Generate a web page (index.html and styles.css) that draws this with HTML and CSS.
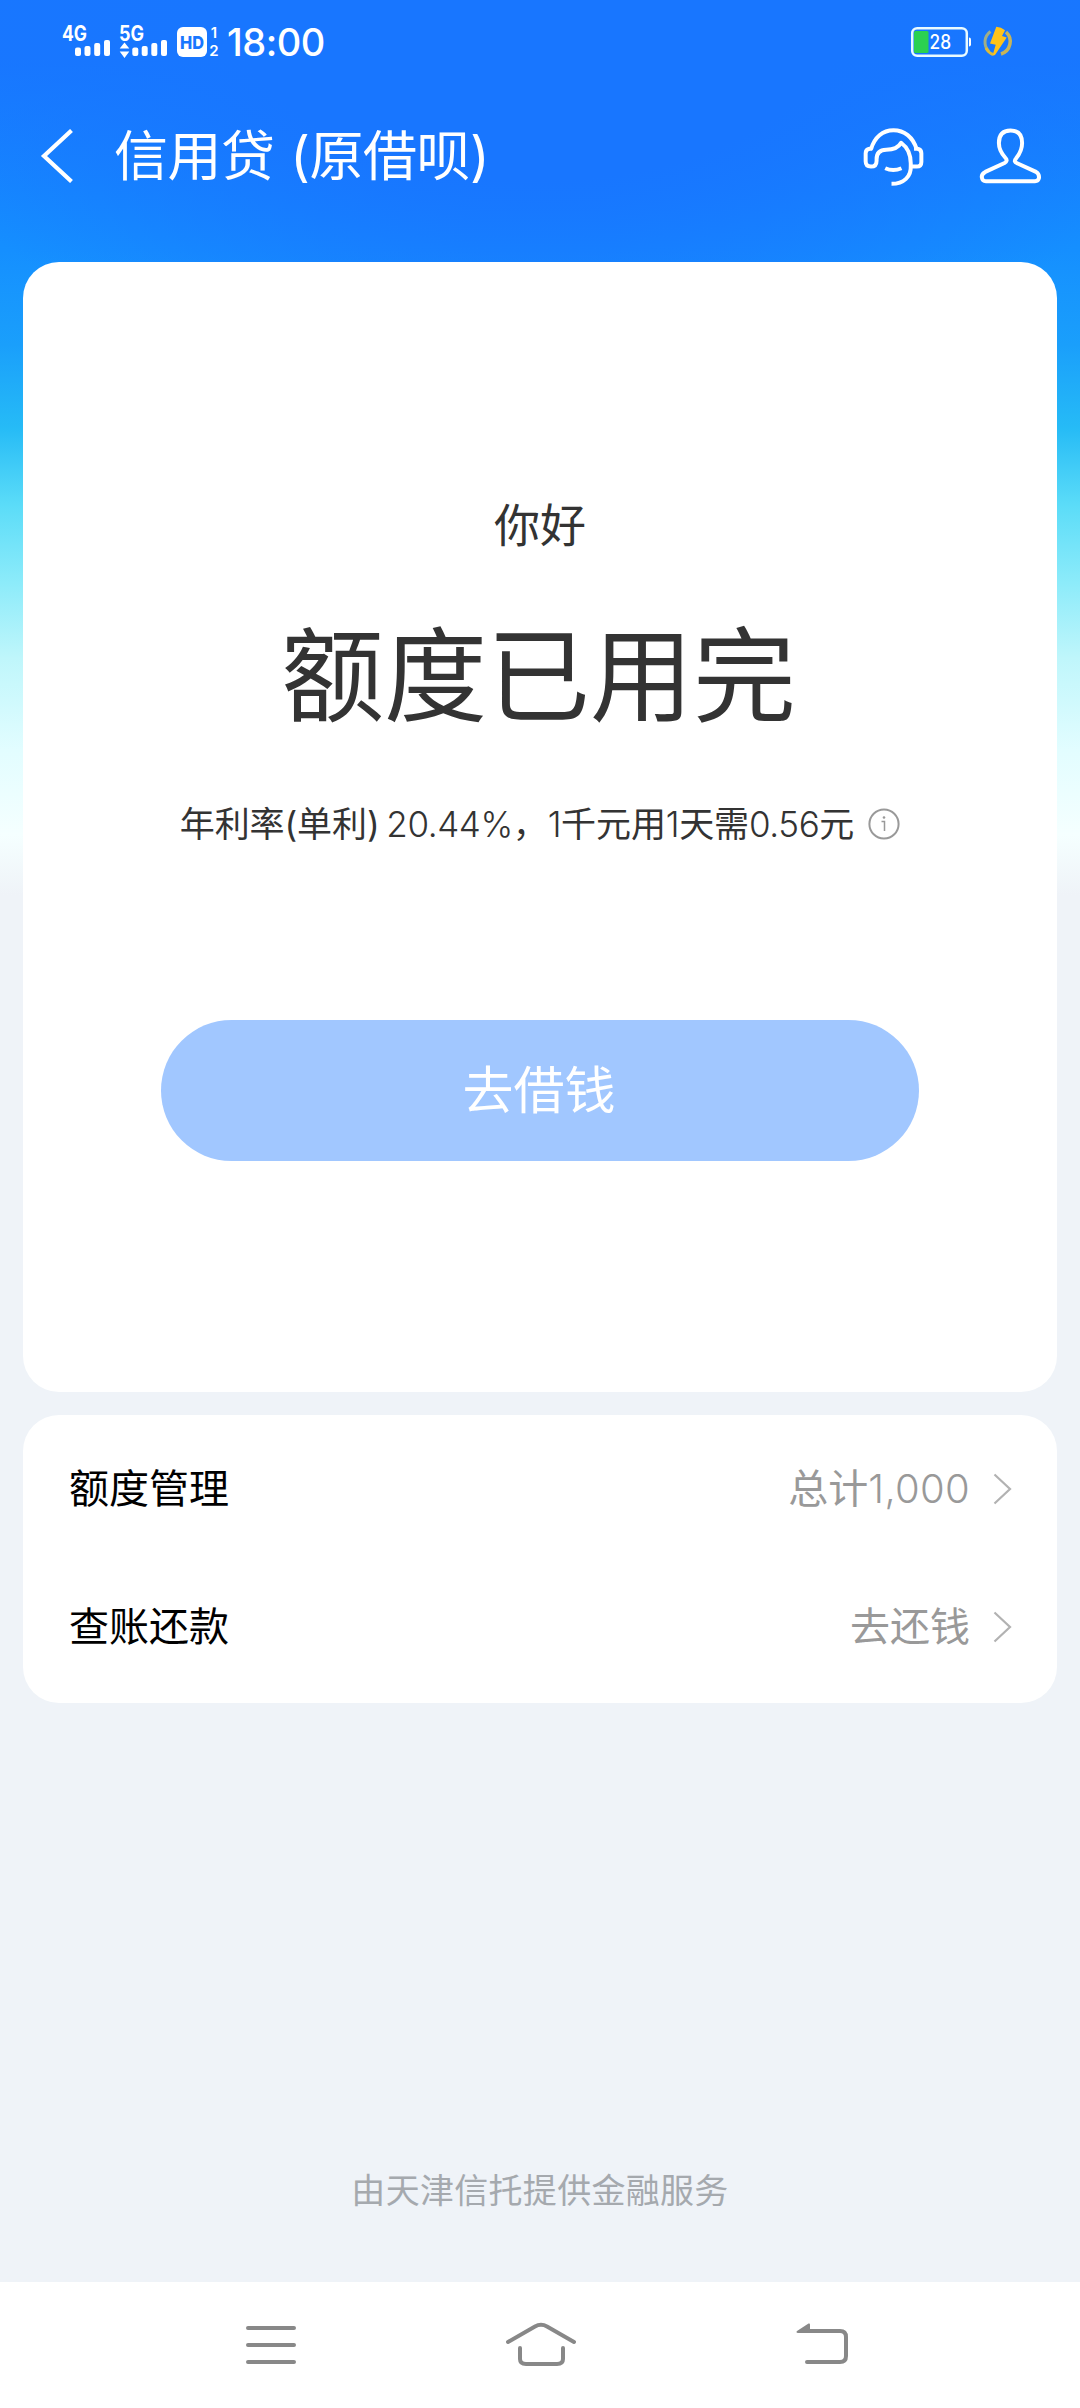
FILE: index.html
```html
<!DOCTYPE html>
<html lang="zh-CN">
<head>
<meta charset="utf-8">
<title>信用贷</title>
<link rel="stylesheet" href="styles.css">
</head>
<body>
<div class="page">
  <div class="status">
    <svg class="signals" viewBox="0 2 150 40" aria-hidden="true">
      <g fill="#fff">
        <text class="net" x="2" y="20.5" textLength="25" lengthAdjust="spacingAndGlyphs">4G</text>
        <rect x="15" y="27.5" width="6" height="8.5" rx="2"/><rect x="24.5" y="26" width="6" height="10" rx="2"/><rect x="34.2" y="23" width="6" height="13" rx="2"/><rect x="44" y="20" width="6" height="16" rx="2"/>
        <text class="net" x="59" y="20.5" textLength="25" lengthAdjust="spacingAndGlyphs">5G</text>
        <path d="M64.500 22.500l4.800 6h-9.600zM64.500 38l4.800-6.500h-9.600z"/>
        <rect x="72.300" y="27.500" width="6" height="8.500" rx="2"/><rect x="81.700" y="26" width="6" height="10" rx="2"/><rect x="91.300" y="23" width="6" height="13" rx="2"/><rect x="101" y="20" width="6" height="16" rx="2"/>
        <rect x="117" y="7" width="30" height="30" rx="6"/>
      </g>
      <text class="hd" x="120" y="28.500" textLength="24" lengthAdjust="spacingAndGlyphs">HD</text>
    </svg>
    <div class="sims"><span>1</span><span>2</span></div>
    <span class="time">18:00</span>
    <svg class="power" viewBox="0 2 106 40" aria-hidden="true">
      <rect x="5.200" y="8.200" width="54.600" height="27.600" rx="5" fill="none" stroke="#e9fbff" stroke-width="2.500"/>
      <rect x="7" y="11" width="14.500" height="22" rx="1.500" fill="#2bd151"/>
      <path d="M62 17.500q2 0 2 2v5q0 2-2 2z" fill="#fff"/>
      <text class="level" x="22.500" y="29" textLength="21.500" lengthAdjust="spacingAndGlyphs">28</text>
      <path d="M83.500 11.500a13 13 0 0 0-1.500 20" fill="none" stroke="#9fae88" stroke-width="3"/>
      <path d="M99 12a13 13 0 0 1-5 22" fill="none" stroke="#c7b459" stroke-width="3.500"/>
      <path d="M79 28q2 4.500 7 6.500" fill="none" stroke="#ddbb38" stroke-width="3"/>
      <path d="M89.300 6.700q5 .3 8.700 3.500l-3 5.800 4.700 1.500L88 35l-2.500.7 3.200-11-5.700-1.200z" fill="#ffc31a"/>
    </svg>
  </div>

  <header class="topbar">
    <svg class="back" viewBox="0 0 34 54"><path d="M31.500 1.500L4 27l27.500 25.500" fill="none" stroke="#fff" stroke-width="4.200"/></svg>
    <h1 class="title">信用贷 (原借呗)</h1>
    <svg class="tool" viewBox="130 80 190 180">
      <g fill="none" stroke="#fff" stroke-width="12" stroke-linejoin="round">
        <path d="M154 150C164 113 190 92 222 92s59 21 70 58"/>
        <path d="M158 148h-8q-12 2-12 14v24q0 16 16 16 17 0 17-18v-4c0-20 11-29 29-29 24 0 38-8 45-21 19 14 29 36 29 62v8c2 32-21 54-58 54"/>
        <path d="M284 148h10q12 2 12 14v26q0 14-14 14h-16"/>
        <path d="M197 207q24 11 49 0"/>
      </g>
    </svg>
    <svg class="tool" viewBox="478 80 190 180">
      <path d="M487 236q-3-11 10-18l58-27q11-6 3-15c-16-17-20-30-20-45 0-26 13-38 35-38s35 12 35 38c0 17-4 29-18 46-7 8-4 12 3 15l57 26q10 6 9 18-2 10-12 10H499q-11 0-12-10z" fill="none" stroke="#fff" stroke-width="12" stroke-linejoin="round"/>
    </svg>
  </header>

  <main class="content">
    <section class="card quota">
      <p class="hello">你好</p>
      <p class="headline">额度已用完</p>
      <p class="rate"><span>年利率(单利) <span class="num">20.44%</span>，<span class="num">1</span>千元用<span class="num">1</span>天需<span class="num">0.56</span>元</span>
        <svg class="info" viewBox="0 0 32 32"><circle cx="16" cy="16" r="14.600" fill="none" stroke="#999" stroke-width="2"/><path d="M13.500 13.500h3V23" fill="none" stroke="#999" stroke-width="1.500"/><circle cx="16" cy="9.500" r="1.300" fill="#999"/></svg>
      </p>
      <button class="borrow">去借钱</button>
    </section>
    <section class="card list">
      <div class="row"><span class="label">额度管理</span><span class="value">总计<span class="total">1,000</span></span><svg class="more" viewBox="0 0 19 32"><path d="M1.500 1.500L17 16 1.500 30.500" fill="none" stroke="#b2b2b2" stroke-width="2.200"/></svg></div>
      <div class="row"><span class="label">查账还款</span><span class="value">去还钱</span><svg class="more" viewBox="0 0 19 32"><path d="M1.500 1.500L17 16 1.500 30.500" fill="none" stroke="#b2b2b2" stroke-width="2.200"/></svg></div>
    </section>
  </main>

  <p class="provider">由天津信托提供金融服务</p>

  <nav class="sysnav">
    <svg viewBox="0 0 80 50"><path d="M18 8h46M18 25h46M18 42h46" stroke="#888" stroke-width="4" stroke-linecap="round"/></svg>
    <svg viewBox="0 0 80 50"><g fill="none" stroke="#888" stroke-width="4" stroke-linecap="round"><path d="M7 22L34 6.500q6-3.500 12 0L73 22"/><path d="M19 28v11q0 5 6 5h31q6 0 6-5V28"/></g></svg>
    <svg viewBox="0 0 80 50"><path d="M22 11h32q6 0 6 6v19q0 6-6 6H21" fill="none" stroke="#888" stroke-width="4" stroke-linecap="round"/><path d="M11 11l11.500-7.500q1.500-.5 1.500 1V13H12q-2.500-.5-1-2z" fill="#888"/></svg>
  </nav>
</div>
</body>
</html>
```
FILE: styles.css
```css
* { box-sizing: border-box; }
body, h1, p { margin: 0; }
body {
  font-family: Inter, "Noto Sans CJK SC", sans-serif;
  font-weight: 400;
  color: #333;
}
svg { display: block; flex: none; }
.page {
  width: 1080px;
  height: 2408px;
  display: flex;
  flex-direction: column;
  background:
    radial-gradient(ellipse 680px 400px at 50% 0, #1876ff 45%, rgba(24, 118, 255, 0) 100%) no-repeat,
    linear-gradient(180deg, #1877ff 0, #1877ff 60px, #1587ff 190px, #158fff 250px, #1a9ffb 345px, #26bbf6 428px, #5bdcf8 505px, #8cebfa 582px, #bff6fb 658px, #e2fdff 750px, #f5ffff 835px, #eff3f8 895px, #eff3f8 100%);
}

/* system status bar */
.status {
  height: 84px;
  padding: 0 67px 0 60px;
  display: flex;
  align-items: center;
  color: #fff;
}
.signals { width: 150px; height: 40px; }
.net { font: 700 21px Inter, sans-serif; }
.hd { font: 800 18px Inter, sans-serif; fill: #1877ff; }
.sims {
  width: 12px;
  margin-left: -2px;
  display: flex;
  flex-direction: column;
  align-items: center;
  font-size: 15px;
  font-weight: 600;
  line-height: 18.500px;
}
.time {
  margin-left: 7px;
  font-size: 38px;
  font-weight: 500;
  line-height: 84px;
  letter-spacing: -0.500px;
}
.power { width: 106px; height: 40px; margin-left: auto; overflow: visible; }
.level { font: 500 19.500px Inter, sans-serif; fill: #fff; }

/* page header */
.topbar {
  height: 144px;
  padding: 0 38px 0 40px;
  display: flex;
  align-items: center;
}
.back { width: 34px; height: 54px; }
.title {
  flex: 1;
  margin-left: 40px;
  padding-top: 2px;
  color: #fff;
  font-size: 54px;
  font-weight: 400;
  line-height: 80px;
  letter-spacing: -0.500px;
  word-spacing: 1px;
}
.tool { width: 63px; height: 60px; }
.tool + .tool { margin-left: 53px; }

.content {
  margin-top: 34px;
  padding: 0 23px;
  display: flex;
  flex-direction: column;
  gap: 23px;
}
.card { background: #fff; border-radius: 36px; }

.quota {
  height: 1130px;
  padding-top: 233px;
  display: flex;
  flex-direction: column;
  align-items: center;
}
.hello { font-size: 46px; line-height: 60px; }
.headline {
  margin-top: 62px;
  padding-right: 3px;
  font-size: 103px;
  line-height: 120px;
}
.rate {
  margin-top: 62px;
  display: flex;
  align-items: center;
  gap: 14px;
  font-size: 35px;
  line-height: 50px;
  letter-spacing: -0.100px;
  word-spacing: -3px;
}
.num { font-weight: 300; letter-spacing: -0.400px; }
.info { width: 32px; height: 32px; }
.borrow {
  width: 758px;
  height: 141px;
  margin-top: 171px;
  padding: 0 2px 0 0;
  border: 0;
  border-radius: 71px;
  background: #a1c7ff;
  color: #fff;
  font: 400 51px/141px Inter, "Noto Sans CJK SC", sans-serif;
}

.list { height: 288px; padding: 5px 45px 7px 46px; }
.row {
  height: 138px;
  display: flex;
  align-items: center;
  font-size: 40px;
  line-height: 50px;
}
.label { flex: 1; color: #000; }
.value { margin-right: 23px; color: #999; }
.total { font-weight: 300; letter-spacing: 0.300px; }
.more { width: 19px; height: 32px; }

.provider {
  margin-top: auto;
  padding-bottom: 66px;
  text-align: center;
  font-size: 34px;
  line-height: 50px;
  letter-spacing: 0.300px;
  color: #a5a9ae;
}

/* system navigation */
.sysnav {
  height: 126px;
  padding-left: 230px;
  display: flex;
  align-items: center;
  background: #fff;
}
.sysnav svg { width: 80px; height: 50px; }
.sysnav svg:nth-child(2) { margin: 0 205px 0 191px; }
```
